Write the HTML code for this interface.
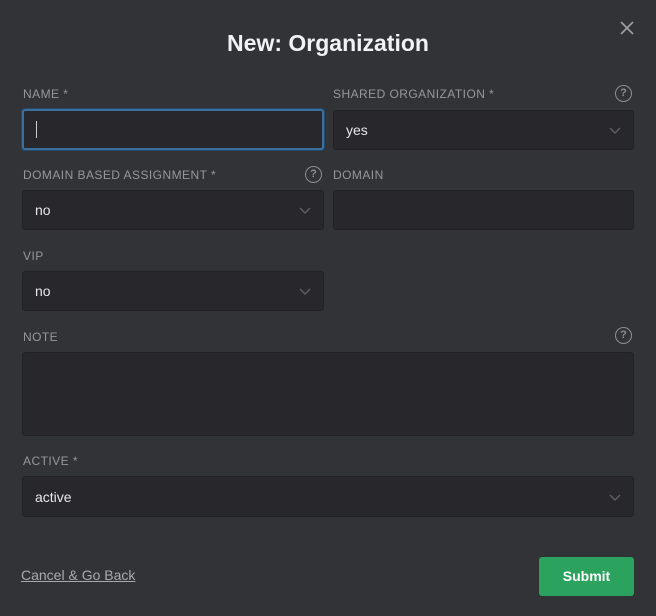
<!DOCTYPE html>
<html><head><meta charset="utf-8"><style>
*{box-sizing:border-box;margin:0;padding:0}
body{width:656px;height:616px;background:#323337;font-family:"Liberation Sans",sans-serif;position:relative;overflow:hidden;color:#e6e6e8}
.t{position:absolute;top:30px;left:0;width:656px;text-align:center;font-size:23px;font-weight:bold;color:#f2f2f4}
.lbl{position:absolute;font-size:12px;letter-spacing:0.45px;color:#96979b;text-transform:uppercase}
.f{position:absolute;background:#28282c;border:1px solid #222226;border-radius:3px;font-size:14px;color:#e8e8ea;padding-left:12px;display:flex;align-items:center}
.chev{position:absolute;right:12px;top:50%;margin-top:-3px}
.q{position:absolute;width:17px;height:17px;border:1.5px solid #8d8e92;border-radius:50%;font-size:11px;font-weight:bold;color:#8d8e92;text-align:center;line-height:14px}
</style></head><body>
<div class="t">New: Organization</div>
<svg style="position:absolute;left:620px;top:21px" width="14" height="14"><path d="M1 1L13 13M13 1L1 13" stroke="#a0a1a5" stroke-width="1.6"/></svg>

<div class="lbl" style="left:23px;top:87px">Name *</div>
<div class="f" style="left:22px;top:109px;width:302px;height:41px;border:2px solid #3a6f9e;box-shadow:0 0 0 1px #24496b"><span style="width:1px;height:17px;background:#ccc;display:block"></span></div>

<div class="lbl" style="left:333px;top:87px">Shared Organization *</div>
<div class="q" style="left:615px;top:85px">?</div>
<div class="f" style="left:333px;top:110px;width:301px;height:40px">yes<svg class="chev" width="12" height="8"><path d="M1 1L6 6L11 1" fill="none" stroke="#5e5f63" stroke-width="1.5"/></svg></div>

<div class="lbl" style="left:23px;top:168px">Domain based assignment *</div>
<div class="q" style="left:305px;top:166px">?</div>
<div class="f" style="left:22px;top:190px;width:302px;height:40px">no<svg class="chev" width="12" height="8"><path d="M1 1L6 6L11 1" fill="none" stroke="#5e5f63" stroke-width="1.5"/></svg></div>

<div class="lbl" style="left:333px;top:168px">Domain</div>
<div class="f" style="left:333px;top:190px;width:301px;height:40px"></div>

<div class="lbl" style="left:23px;top:249px">VIP</div>
<div class="f" style="left:22px;top:271px;width:302px;height:40px">no<svg class="chev" width="12" height="8"><path d="M1 1L6 6L11 1" fill="none" stroke="#5e5f63" stroke-width="1.5"/></svg></div>

<div class="lbl" style="left:23px;top:330px">Note</div>
<div class="q" style="left:615px;top:327px">?</div>
<div class="f" style="left:22px;top:352px;width:612px;height:84px"></div>

<div class="lbl" style="left:23px;top:454px">Active *</div>
<div class="f" style="left:22px;top:476px;width:612px;height:41px">active<svg class="chev" width="12" height="8"><path d="M1 1L6 6L11 1" fill="none" stroke="#5e5f63" stroke-width="1.5"/></svg></div>

<div style="position:absolute;left:21px;top:567px;font-size:14px;color:#a9aaae;text-decoration:underline">Cancel &amp; Go Back</div>
<div style="position:absolute;left:539px;top:557px;width:95px;height:39px;background:#2ba35e;border-radius:3px;color:#fff;font-size:14px;font-weight:bold;text-align:center;line-height:39px">Submit</div>
</body></html>
